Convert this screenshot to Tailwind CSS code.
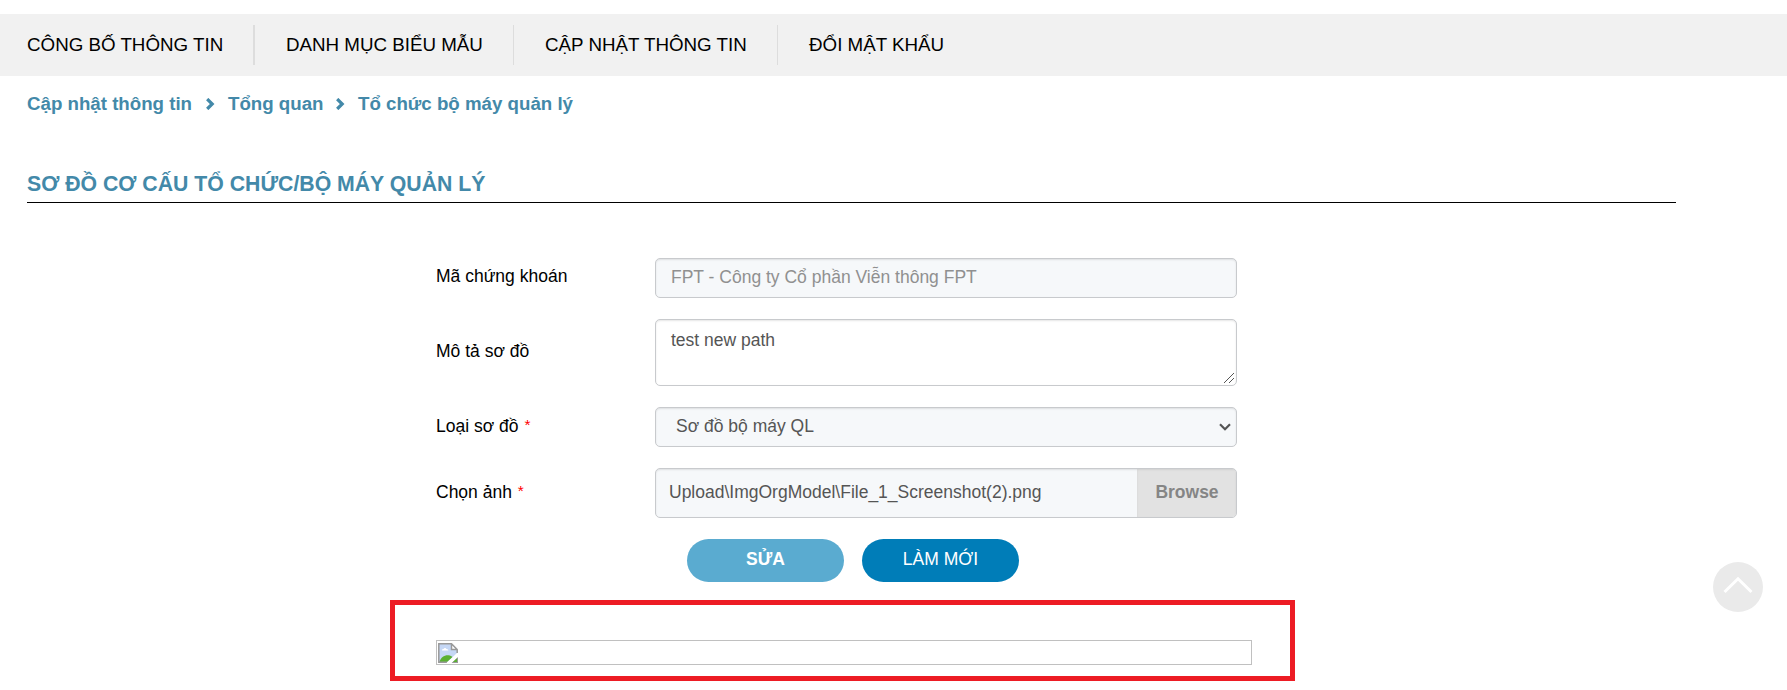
<!DOCTYPE html>
<html lang="vi">
<head>
<meta charset="utf-8">
<title>Tổ chức bộ máy quản lý</title>
<script src="https://cdn.jsdelivr.net/npm/@tailwindcss/browser@4"></script>
</head>
<body class="bg-white text-black font-['Liberation_Sans',Arial,sans-serif] text-[17.5px] h-[690px] overflow-hidden">
<nav class="mt-[14px] h-[62px] bg-[#f1f1f1] pl-[27px] flex items-center text-[18.75px] whitespace-nowrap">
  <a class="w-[228px] h-10 border-r-2 border-[#dddddd] leading-[39px]">CÔNG BỐ THÔNG TIN</a>
  <a class="w-[259px] h-10 border-r border-[#dddddd] leading-[39px] pl-[31px]">DANH MỤC BIỂU MẪU</a>
  <a class="w-[264px] h-10 border-r border-[#dddddd] leading-[39px] pl-[31px]">CẬP NHẬT THÔNG TIN</a>
  <a class="h-10 leading-[39px] pl-[31px]">ĐỔI MẬT KHẨU</a>
</nav>
<main class="ml-[27px] w-[1649px]">
  <div class="flex items-center h-7 mt-[14px] font-bold text-[18.7px] text-[#4389a9] whitespace-nowrap">
    <span class="w-[179px]">Cập nhật thông tin</span>
    <svg class="w-[9px] h-3 shrink-0" viewBox="0 0 9 12" fill="none" stroke="currentColor" stroke-width="3.200"><path d="M1.200 1 6.200 6 1.200 11"/></svg>
    <span class="ml-[13px] w-[108px]">Tổng quan</span>
    <svg class="w-[9px] h-3 shrink-0" viewBox="0 0 9 12" fill="none" stroke="currentColor" stroke-width="3.200"><path d="M1.200 1 6.200 6 1.200 11"/></svg>
    <span class="ml-[13px]">Tổ chức bộ máy quản lý</span>
  </div>
  <h1 class="mt-[51px] h-[34px] border-b border-black font-bold text-[21.25px] leading-[30px] text-[#4389a9] whitespace-nowrap">SƠ ĐỒ CƠ CẤU TỔ CHỨC/BỘ MÁY QUẢN LÝ</h1>
</main>
<form class="mt-[55px] ml-[436px] w-[801px] flex flex-col gap-[21px]">
  <div class="flex h-10 items-center">
    <label class="w-[219px] pb-[3px]">Mã chứng khoán</label>
    <div class="w-[582px] h-10 rounded-[5px] border border-[#c8cacd] bg-[#f6f8fa] shadow-[inset_0_1px_2px_rgba(0,0,0,0.1)] pl-[15px] leading-[36px] text-[#909090]">FPT - Công ty Cổ phần Viễn thông FPT</div>
  </div>
  <div class="flex h-[67px] items-center">
    <label class="w-[219px] pb-[2px]">Mô tả sơ đồ</label>
    <div class="relative w-[582px] h-[67px] rounded-[5px] border border-[#c8cacd] shadow-[inset_0_1px_2px_rgba(0,0,0,0.1)] pl-[15px] pt-[8px] leading-[24px] text-[#555]">test new path
      <svg class="absolute right-[2px] bottom-[2px] w-[10px] h-[10px]" viewBox="0 0 10 10" fill="none" stroke="#555" stroke-width="1"><path d="M0 10 10 0M5 10l5-5"/></svg>
    </div>
  </div>
  <div class="flex h-10 items-center">
    <label class="w-[219px] pb-[2px]">Loại sơ đồ <span class="relative -top-[2px] ml-px text-[15.500px] leading-none text-[#f00]">*</span></label>
    <div class="flex items-center justify-between w-[582px] h-10 rounded-[5px] border border-[#c8cacd] bg-[#f6f8fa] shadow-[inset_0_1px_2px_rgba(0,0,0,0.1)] pl-5 pr-[5px] text-[#555]"><span class="pb-[2px]">Sơ đồ bộ máy QL</span>
      <svg class="w-3 h-2" viewBox="0 0 12 8" fill="none" stroke="#555" stroke-width="2.200"><path d="M1 1.200 6 6.200 11 1.200"/></svg>
    </div>
  </div>
  <div class="flex h-[50px] items-center">
    <label class="w-[219px] pb-[2px]">Chọn ảnh <span class="relative -top-[2px] ml-px text-[15.500px] leading-none text-[#f00]">*</span></label>
    <div class="relative flex w-[582px] h-[50px] rounded-[5px] border border-[#c8cacd] bg-[#f6f8fa] shadow-[inset_0_1px_2px_rgba(0,0,0,0.1)] overflow-hidden leading-[47px] text-[#555]">
      <span class="w-[481px] pl-[13px]">Upload\ImgOrgModel\File_1_Screenshot(2).png</span>
      <span class="w-[99px] pl-[1px] bg-[#e2e2e2] shadow-[inset_0_1px_2px_rgba(0,0,0,0.08)] text-center font-bold text-[#858585]">Browse</span>
    </div>
  </div>
  <div class="flex gap-[18px] ml-[251px]">
    <button type="button" class="w-[157px] h-[43px] rounded-full bg-[#5aabd0] text-white font-bold pb-[2px]">SỬA</button>
    <button type="button" class="w-[157px] h-[43px] rounded-full bg-[#007db8] text-white pb-[2px]">LÀM MỚI</button>
  </div>
</form>
<section class="mt-[18px] ml-[390px] w-[905px] h-[81px] border-5 border-[#ed1c24] pt-[35px] pl-[41px]">
  <div class="w-[816px] h-[25px] border border-[#c0c0c0] pl-px pt-[2px]">
    <svg class="w-5 h-5" viewBox="0 0 20 20">
      <path d="M1 1h12.500l5.500 5.500V10L9.500 19H1z" fill="#c5d7f5"/>
      <path d="M4 7.500c0-1.300 1-1.600 1.600-1.500C6 4.600 8 4.600 8.300 6c1.200 0 2 .5 2 1.500z" fill="#fff"/>
      <path d="M1.500 19c1-4.500 5-7.200 9-6.800 2 .2 3.200.9 4 1.800L9 19z" fill="#5ab031"/>
      <path d="M13 1v6h6z" fill="#fff"/>
      <path d="M13.500 1v5.500H19M9 19.200H.8V.8h12.700L19.200 6.500V10" fill="none" stroke="#999" stroke-width="1.500"/>
      <path d="M13.500 19.900 20 14v5.900z" fill="#999"/>
      <path d="M15 19l4-3.700V19z" fill="#5ab031"/>
      <path d="M8.500 20 20 9.800v3.700L13 20z" fill="#fff"/>
    </svg>
  </div>
</section>
<div class="fixed left-[1713px] top-[562px] w-[50px] h-[50px] rounded-full bg-[#eaeaea]">
  <svg class="w-[50px] h-[50px]" viewBox="0 0 50 50" fill="none" stroke="#fff" stroke-width="3"><path d="M11.500 30 25 16.800 38.500 30"/></svg>
</div>
</body>
</html>
